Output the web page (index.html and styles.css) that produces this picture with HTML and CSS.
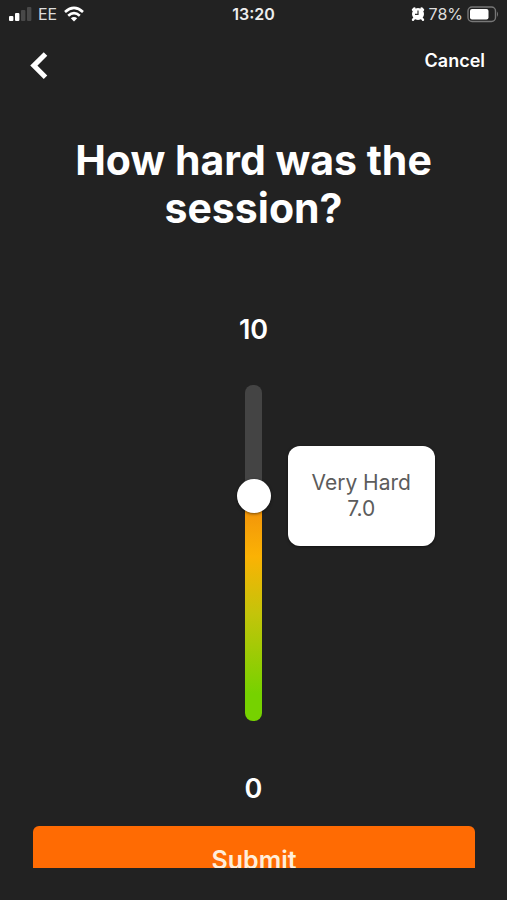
FILE: index.html
```html
<!DOCTYPE html>
<html lang="en">
<head>
<meta charset="utf-8">
<meta name="viewport" content="width=device-width, initial-scale=1">
<title>Session difficulty</title>
<link rel="stylesheet" href="styles.css">
</head>
<body>
<div class="screen">
  <div class="status">
    <div class="status-side">
      <svg width="24" height="16" viewBox="0 0 24 16" fill="#fff" aria-hidden="true">
        <rect x="1" y="10" width="4.4" height="5" rx="1"/>
        <rect x="7" y="7" width="4.4" height="8" rx="1"/>
        <rect x="13" y="4" width="4.4" height="11" rx="1" fill="#484848"/>
        <rect x="19" y="1" width="4.4" height="14" rx="1" fill="#484848"/>
      </svg>
      <span>EE</span>
      <svg class="wifi" width="22" height="16" viewBox="0 0 22 16" fill="none" stroke="#fff" stroke-width="2.6" aria-hidden="true">
        <path d="M2 6Q11-2.2 20 6M5.2 9.8Q11 4.4 16.8 9.8"/>
        <path d="M11 15.6L7.8 12.2Q11 9.6 14.2 12.2Z" fill="#fff" stroke="none"/>
      </svg>
    </div>
    <span class="time">13:20</span>
    <div class="status-side status-end">
      <svg width="14" height="16" viewBox="0 0 14 16" aria-hidden="true">
        <path d="M2 3.8L3.4 2.4M12 3.8L10.6 2.4M3 12.5L2 13.8M11 12.5L12 13.8" stroke="#fff" stroke-width="2.4" stroke-linecap="round"/>
        <circle cx="7" cy="8" r="6" fill="#fff"/>
        <path d="M7 4.5V8.3H4" fill="none" stroke="#333" stroke-width="1.2"/>
      </svg>
      <span>78%</span>
      <svg width="32" height="17" viewBox="0 0 32 17" aria-hidden="true">
        <rect x="1" y="1" width="27.5" height="14.5" rx="4" fill="none" stroke="#777" stroke-width="1.4"/>
        <rect x="3" y="3" width="18.5" height="10.5" rx="2" fill="#fff"/>
        <path d="M30 5.5Q32 8 30 11Z" fill="#777"/>
      </svg>
    </div>
  </div>
  <main class="content">
    <nav class="nav">
      <button class="back" type="button" aria-label="Back">
        <svg width="18" height="28" viewBox="0 0 18 28" fill="none" stroke="#fff" stroke-width="5" aria-hidden="true"><path d="M15.5 2L3.8 13.6L15.5 25.2"/></svg>
      </button>
      <button class="cancel" type="button">Cancel</button>
    </nav>
    <h1 class="title"><label for="effort">How hard was the session?</label></h1>
    <div class="scale">
      <span class="limit">10</span>
      <div class="slider">
        <div class="track"></div>
        <input class="range" id="effort" type="range" min="0" max="10" step="0.1" value="6.9">
        <output class="bubble" for="effort"><span>Very Hard</span><span>7.0</span></output>
      </div>
      <span class="limit">0</span>
    </div>
    <button class="submit" type="button">Submit</button>
  </main>
</div>
</body>
</html>
```
FILE: styles.css
```css
* {
  box-sizing: border-box;
}

body {
  margin: 0;
  background: #222;
  color: #fff;
  font-family: Inter, "Liberation Sans", sans-serif;
}

button {
  border: 0;
  padding: 0;
  background: none;
  color: inherit;
  font: inherit;
}

svg {
  display: block;
}

.screen {
  display: flex;
  flex-direction: column;
  height: 100vh;
  padding-bottom: 32px;
}

.status {
  display: grid;
  grid-template-columns: 1fr auto 1fr;
  align-items: center;
  height: 28px;
  padding: 0 8px;
  color: #ddd;
  font-size: 16px;
}

.status-side {
  display: flex;
  align-items: center;
  gap: 6px;
}

.status-end {
  justify-content: flex-end;
  gap: 4px;
}

.time {
  color: #eee;
  font-weight: 600;
}

.content {
  display: flex;
  flex: 1;
  flex-direction: column;
  min-height: 0;
  overflow: hidden;
}

.nav {
  display: flex;
  flex-shrink: 0;
  align-items: flex-start;
  justify-content: space-between;
  height: 108px;
  padding: 24px 22px 0 30px;
}

.cancel {
  font-size: 18px;
  font-weight: 600;
  line-height: 18px;
}

.title {
  margin: 0;
  padding: 0 64px;
  font-size: 41px;
  font-weight: 700;
  line-height: 48px;
  text-align: center;
}

.scale {
  display: flex;
  flex-direction: column;
  align-items: center;
  padding-top: 82px;
}

.limit {
  font-size: 27px;
  font-weight: 600;
  line-height: 32px;
}

.slider {
  position: relative;
  display: grid;
  place-items: center;
  width: 34px;
  height: 336px;
  margin: 39px 0 52px;
}

.track,
.range {
  grid-area: 1 / 1;
  height: 336px;
}

.track {
  width: 17px;
  border-radius: 8px;
  background: linear-gradient(#444 33%, #f08c0c 33%, #fbb204 51%, #c4c40a 68%, #76d200 92%);
}

.range {
  width: 34px;
  margin: 0;
  appearance: none;
  background: transparent;
  direction: rtl;
  writing-mode: vertical-lr;
}

.range::-webkit-slider-thumb {
  width: 34px;
  height: 34px;
  border-radius: 50%;
  appearance: none;
  background: #fff;
  box-shadow: 0 1px 3px rgba(0, 0, 0, 0.5);
}

.bubble {
  position: absolute;
  top: 61px;
  left: 51px;
  display: flex;
  flex-direction: column;
  align-items: center;
  padding: 24px;
  border-radius: 12px;
  background: #fff;
  box-shadow: 0 1px 3px rgba(0, 0, 0, 0.5);
  color: #5c5c5c;
  font-size: 21px;
  line-height: 26px;
  white-space: nowrap;
}

.submit {
  flex-shrink: 0;
  height: 68px;
  margin: 21px 32px 0 33px;
  border-radius: 6px;
  background: #ff6b03;
  color: #ffeedb;
  font-size: 25px;
  font-weight: 600;
}
```
